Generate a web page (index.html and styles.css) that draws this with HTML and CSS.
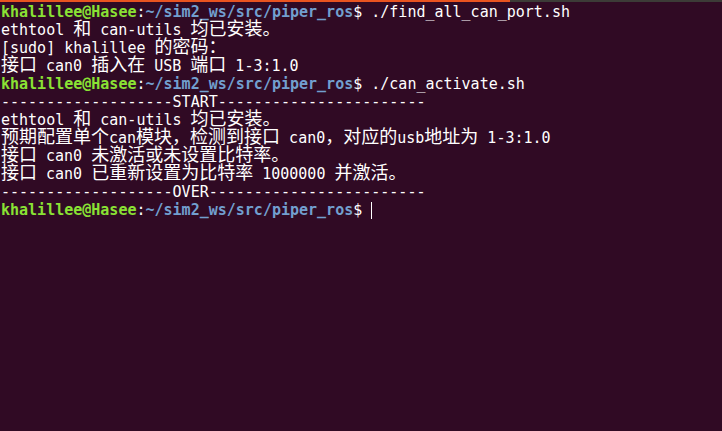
FILE: index.html
```html
<!DOCTYPE html>
<html lang="zh">
<head>
<meta charset="utf-8">
<title>Terminal</title>
<link rel="stylesheet" href="styles.css">
</head>
<body>
<div class="term">
  <div class="bar"><div class="bar-fill"></div></div>
  <div class="screen">
    <div class="ln"><span class="u">khalillee@Hasee</span>:<span class="p">~/sim2_ws/src/piper_ros</span>$ ./find_all_can_port.sh</div>
    <div class="ln">ethtool <span class="cj">和</span> can-utils <span class="cj">均已安装。</span></div>
    <div class="ln">[sudo] khalillee <span class="cj">的密码：</span></div>
    <div class="ln"><span class="cj">接口</span> can0 <span class="cj">插入在</span> USB <span class="cj">端口</span> 1-3:1.0</div>
    <div class="ln"><span class="u">khalillee@Hasee</span>:<span class="p">~/sim2_ws/src/piper_ros</span>$ ./can_activate.sh</div>
    <div class="ln">-------------------START-----------------------</div>
    <div class="ln">ethtool <span class="cj">和</span> can-utils <span class="cj">均已安装。</span></div>
    <div class="ln"><span class="cj">预期配置单个</span>can<span class="cj">模块，检测到接口</span> can0<span class="cj">，对应的</span>usb<span class="cj">地址为</span> 1-3:1.0</div>
    <div class="ln"><span class="cj">接口</span> can0 <span class="cj">未激活或未设置比特率。</span></div>
    <div class="ln"><span class="cj">接口</span> can0 <span class="cj">已重新设置为比特率</span> 1000000 <span class="cj">并激活。</span></div>
    <div class="ln">-------------------OVER------------------------</div>
    <div class="ln"><span class="u">khalillee@Hasee</span>:<span class="p">~/sim2_ws/src/piper_ros</span>$ <span class="cursor"></span></div>
  </div>
</div>
</body>
</html>
```
FILE: styles.css
```css
html, body {
  margin: 0;
  padding: 0;
  background: #300a24;
}
.term {
  width: 722px;
  height: 431px;
  overflow: hidden;
  background: #300a24;
  display: flex;
  flex-direction: column;
}
.bar {
  height: 2px;
  background: #3c3b37;
  display: flex;
}
.bar-fill {
  width: 510px;
  background: #e95420;
}
.screen {
  padding: 1px 0 0 1px;
  font-family: "DejaVu Sans Mono", "Noto Sans CJK SC", monospace;
  font-size: 15px;
  color: #ffffff;
}
.ln {
  height: 18px;
  line-height: 18px;
  white-space: pre;
}
.cj {
  font-family: "Noto Sans CJK SC", sans-serif;
  font-size: 18px;
  line-height: 0;
}
.u {
  color: #8ae234;
  font-weight: bold;
}
.p {
  color: #729fcf;
  font-weight: bold;
}
.cursor {
  display: inline-block;
  width: 1px;
  height: 17px;
  background: #ffffff;
  vertical-align: -4px;
}
```
